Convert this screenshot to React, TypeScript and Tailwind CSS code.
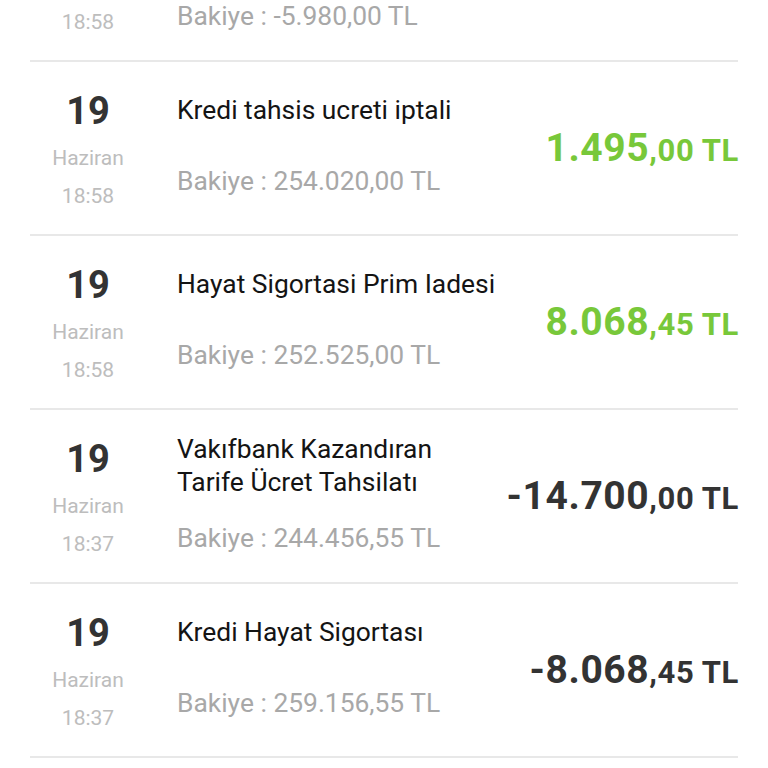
import React from "react";

type Row = {
  day: string;
  month: string;
  time: string;
  title: string[];
  balance: string;
  big: string;
  small: string;
  positive: boolean;
};

const rows: Row[] = [
  {
    day: "19",
    month: "Haziran",
    time: "18:58",
    title: ["Kredi Kullandırım", "Ücreti Tahsilatı"],
    balance: "-5.980,00",
    big: "-1.495",
    small: ",00 TL",
    positive: false,
  },
  {
    day: "19",
    month: "Haziran",
    time: "18:58",
    title: ["Kredi tahsis ucreti iptali"],
    balance: "254.020,00",
    big: "1.495",
    small: ",00 TL",
    positive: true,
  },
  {
    day: "19",
    month: "Haziran",
    time: "18:58",
    title: ["Hayat Sigortasi Prim Iadesi"],
    balance: "252.525,00",
    big: "8.068",
    small: ",45 TL",
    positive: true,
  },
  {
    day: "19",
    month: "Haziran",
    time: "18:37",
    title: ["Vakıfbank Kazandıran", "Tarife Ücret Tahsilatı"],
    balance: "244.456,55",
    big: "-14.700",
    small: ",00 TL",
    positive: false,
  },
  {
    day: "19",
    month: "Haziran",
    time: "18:37",
    title: ["Kredi Hayat Sigortası"],
    balance: "259.156,55",
    big: "-8.068",
    small: ",45 TL",
    positive: false,
  },
  {
    day: "19",
    month: "Haziran",
    time: "18:37",
    title: ["Kredi Kullandırımı"],
    balance: "267.225,00",
    big: "260.000",
    small: ",00 TL",
    positive: true,
  },
];

function TxRow({ r }: { r: Row }) {
  return (
    <div className="flex h-[174px] border-b-2 border-[#e8e8e8]">
      <div className="flex w-[116px] shrink-0 flex-col items-center pt-[27px]">
        <div className="text-[38px] font-bold leading-[44px] text-[#333333]">{r.day}</div>
        <div className="mt-[11px] text-[21px] leading-[28px] text-[#bdbdbd]">{r.month}</div>
        <div className="mt-[10px] text-[21px] leading-[28px] text-[#bdbdbd]">{r.time}</div>
      </div>
      <div className="ml-[31px] flex min-w-0 flex-1 flex-col justify-center pb-[4px]">
        <div className="mb-[23px] min-h-[48px] text-[26.4px] leading-[33px] text-[#141414]">
          {r.title.map((t, i) => (
            <div key={i}>{t}</div>
          ))}
        </div>
        <div className="text-[26.4px] leading-[33px] text-[#a8a8a8]">Bakiye : {r.balance} TL</div>
      </div>
      <div
        className={
          "-mr-[1px] flex shrink-0 items-baseline self-center whitespace-nowrap pt-[3px] font-bold tracking-[0.6px] " +
          (r.positive ? "text-[#78c83a]" : "text-[#333333]")
        }
      >
        <span className="text-[39px] leading-[46px]">{r.big}</span>
        <span className="text-[31px] leading-[46px]">{r.small}</span>
      </div>
    </div>
  );
}

export default function App() {
  return (
    <div
      className="h-[768px] w-[768px] overflow-hidden bg-white"
      style={{ fontFamily: "Roboto, 'Noto Sans', sans-serif" }}
    >
      <div className="mx-[30px] mt-[-112px]">
        {rows.map((r, i) => (
          <TxRow key={i} r={r} />
        ))}
      </div>
    </div>
  );
}
